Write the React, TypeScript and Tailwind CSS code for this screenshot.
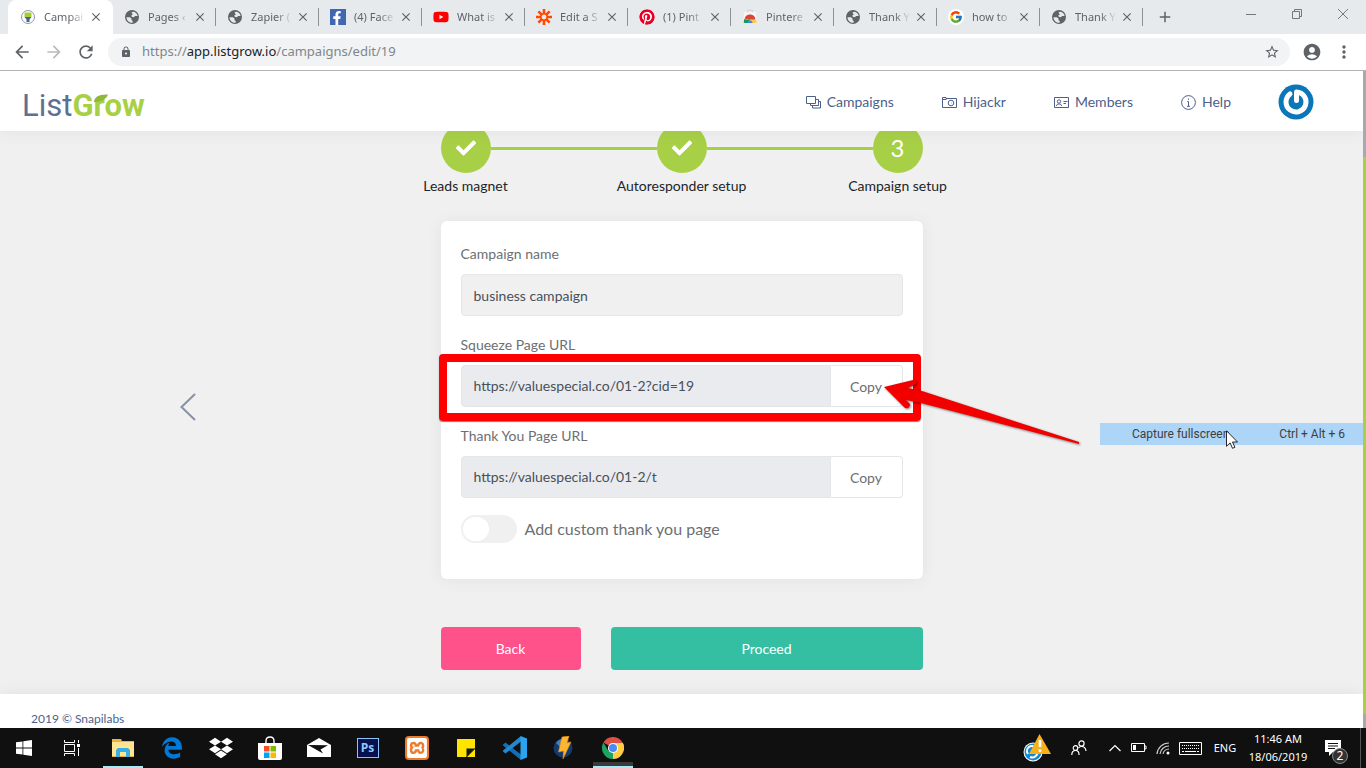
import React, { useState } from 'react';
import {
  MdAccountCircle,
  MdAdd,
  MdArrowBack,
  MdArrowForward,
  MdClose,
  MdLock,
  MdMoreVert,
  MdRefresh,
  MdStarBorder,
} from 'react-icons/md';
import { FaCheck, FaDropbox, FaFacebookF, FaPinterest, FaYoutube } from 'react-icons/fa';
import { FaEdgeLegacy } from 'react-icons/fa6';
import { FcGoogle } from 'react-icons/fc';
import { SiXampp } from 'react-icons/si';

// Favicons

const Globe = () => (
  <svg viewBox="0 0 16 16" className="size-4">
    <circle cx="8" cy="8" r="7" fill="#5f6368" />
    <path
      d="M2.500 8.200h3.300l1.700 1.400v1.700l1.300.800-.300 1.700C5 13.800 2.600 11.500 2.500 8.200ZM7.500 3.200l2.500-.400c2 .800 3.400 2.300 3.600 4.200H11l-1 1.200-2.300-.400-.500-1.300 1.500-.800Z"
      fill="#e7eaed"
    />
  </svg>
);

const ListGrowIcon = () => (
  <svg viewBox="0 0 16 16" className="size-4">
    <circle cx="8" cy="8" r="6.5" fill="#fff" stroke="#8797b3" />
    <path d="M4.500 3.500h7v4l-1.500 1.500H6l-1.500-1.500Z" fill="#a6ce39" />
    <path d="M4.500 8h7L9.500 10.500v2.500h-3v-2.500Z" fill="#4a6396" />
  </svg>
);

const FacebookIcon = () => (
  <span className="flex size-4 items-end justify-end bg-[#4267b2] pr-0.5">
    <FaFacebookF className="size-3.5 text-white" />
  </span>
);

const ZapierIcon = () => (
  <svg viewBox="0 0 16 16" className="size-4" stroke="#ff4a00" strokeWidth="2.6">
    <path d="M8 0v5M8 11v5M0 8h5M11 8h5M2.4 2.4l3.5 3.5M10.1 10.1l3.5 3.5M13.6 2.4l-3.5 3.5M5.9 10.1l-3.5 3.5" />
    <circle cx="8" cy="8" r="3.2" fill="none" strokeWidth="1.6" />
  </svg>
);

const WebStoreIcon = () => (
  <svg viewBox="0 0 16 16" className="size-4">
    <path d="M5.5 3V1.2h5V3" fill="none" stroke="#d0d3d6" />
    <path d="M2 3h12l.5 11h-13Z" fill="#f4f5f6" />
    <path d="M2.6 9.500a5.700 5.700 0 0 1 10.800 0l-1 1.500H8Z" fill="#db4437" />
    <path d="M2.2 10 1.700 14H6L8 11Z" fill="#0f9d58" />
    <path d="M8 10.5h6.2l.3 3.5H8Z" fill="#ffcd40" />
    <path d="M5.5 14a2.5 2.5 0 0 1 5 0Z" fill="#4285f4" />
  </svg>
);

const GoogleIcon = () => (
  <span className="flex size-4 items-center justify-center rounded-full bg-white">
    <FcGoogle className="size-3.5" />
  </span>
);

const tabs = [
  { title: 'Campai', icon: <ListGrowIcon /> },
  { title: 'Pages ‹', icon: <Globe /> },
  { title: 'Zapier (', icon: <Globe /> },
  { title: '(4) Face', icon: <FacebookIcon /> },
  { title: 'What is', icon: <FaYoutube className="size-4 text-[#ff0000]" /> },
  { title: 'Edit a S', icon: <ZapierIcon /> },
  { title: '(1) Pint', icon: <FaPinterest className="size-4 rounded-full bg-white text-[#e60023]" /> },
  { title: 'Pintere', icon: <WebStoreIcon /> },
  { title: 'Thank Y', icon: <Globe /> },
  { title: 'how to', icon: <GoogleIcon /> },
  { title: 'Thank Y', icon: <Globe /> },
];

function BrowserTabs() {
  return (
    <div className="flex h-[34px] bg-[#e7eaed] pl-2 text-[#5f6368]">
      {tabs.map((tab, i) => (
        <div
          key={i}
          className={
            i === 0
              ? 'flex w-[105px] items-center rounded-t-lg bg-white pl-3'
              : 'my-2 flex w-[103px] items-center border-r border-[#8f9295] pl-[11px]'
          }
        >
          {tab.icon}
          <span className="ml-2 w-[42px] text-[11px] whitespace-nowrap [mask-image:linear-gradient(to_right,#000_60%,transparent)]">
            {tab.title}
          </span>
          <button aria-label="Close tab" className="ml-[3px]">
            <MdClose className="size-3.5" />
          </button>
        </div>
      ))}
      <button aria-label="New tab" className="ml-[13px]">
        <MdAdd className="size-[18px]" />
      </button>
      <div className="ml-auto flex h-7 text-[#777]">
        <button aria-label="Minimize" className="flex w-[46px] items-center justify-center">
          <svg viewBox="0 0 10 10" className="size-2.5" stroke="currentColor"><path d="M0 5.5h10" /></svg>
        </button>
        <button aria-label="Restore" className="flex w-[46px] items-center justify-center">
          <svg viewBox="0 0 10 10" className="size-2.5" fill="none" stroke="currentColor">
            <path d="M.5 2.5h7v7h-7ZM2.5 2.5v-2h7v7h-2" />
          </svg>
        </button>
        <button aria-label="Close" className="flex w-[46px] items-center justify-center">
          <svg viewBox="0 0 10 10" className="size-2.5" stroke="currentColor"><path d="m0 0 10 10M10 0 0 10" /></svg>
        </button>
      </div>
    </div>
  );
}

function Toolbar() {
  return (
    <div className="flex h-[37px] items-center border-b border-[#b4b4b4] bg-white pr-3 pl-3 text-[#5f6368]">
      <button aria-label="Back" className="mr-3"><MdArrowBack className="size-5" /></button>
      <button aria-label="Forward" className="mr-3 text-[#bbb]"><MdArrowForward className="size-5" /></button>
      <button aria-label="Reload" className="mr-3"><MdRefresh className="size-5" /></button>
      <div className="flex h-7 flex-1 items-center rounded-full bg-[#f1f3f4] pr-2.5 pl-3">
        <MdLock className="size-3" />
        <div className="ml-2.5 flex-1 text-[13px] text-[#80868b]">
          https://<span className="text-[#202124]">app.listgrow.io</span>/campaigns/edit/19
        </div>
        <button aria-label="Bookmark"><MdStarBorder className="size-4" /></button>
      </div>
      <button aria-label="Profile" className="ml-3"><MdAccountCircle className="size-5" /></button>
      <button aria-label="Menu" className="ml-3"><MdMoreVert className="size-5" /></button>
    </div>
  );
}

// Site header

const navItems = [
  {
    label: 'Campaigns',
    icon: <path d="M.5 1.5h9v7h-9ZM10 4.5h2.5v6h-8V9M13 6.5h1.5v6.5h-8v-2" />,
  },
  {
    label: 'Hijackr',
    icon: (
      <>
        <path d="M.5 4.5h4M.5 2.5h3.5v1H14.5v9H.5Z" />
        <circle cx="9" cy="8" r="2.8" />
        <path d="M9 8h.5" />
      </>
    ),
  },
  {
    label: 'Members',
    icon: (
      <>
        <path d="M.5 2.5h14v10H.5ZM9.5 6.5h4M9.5 8.5h2.5M2.5 11c0-1.5 1-2 2.5-2s2.5.5 2.5 2" />
        <circle cx="5" cy="6.5" r="1.7" />
      </>
    ),
  },
  {
    label: 'Help',
    icon: (
      <>
        <circle cx="7.5" cy="7.5" r="6.9" />
        <path d="M7.5 3.5v1.3M6.3 6.5h1.2v4.5M6 11.3h3" />
      </>
    ),
  },
];

function Header() {
  return (
    <header className="relative z-20 flex h-[60px] items-center bg-white pr-[49px] pl-[22px] pt-0.5 shadow-[0_1px_15px_rgba(70,80,110,0.08)]">
      <a href="#" aria-label="ListGrow" className="relative mt-1.5 flex font-['Roboto',sans-serif] text-[31px] leading-none">
        <span className="text-[#5c7093]">List</span>
        <span className="font-bold text-[#a8d046]">Grow</span>
        <svg viewBox="0 0 14 8" className="absolute top-1 left-[72px] h-2 w-3.5">
          <path d="M0 8C0 3 5 0 14 .5 12 6 6 8 0 8Z" fill="#8fb83a" />
        </svg>
      </a>
      <nav className="ml-auto flex gap-12 text-sm text-[#4d5f8a]">
        {navItems.map((item) => (
          <a key={item.label} href="#" className="flex items-center gap-1.5">
            <svg viewBox="0 0 15 15" className="size-[15px]" fill="none" stroke="currentColor">
              {item.icon}
            </svg>
            {item.label}
          </a>
        ))}
      </nav>
      <button aria-label="Account" className="ml-[47px]">
        <svg viewBox="0 0 36 36" className="size-9">
          <circle cx="18" cy="18" r="17.5" fill="#0b76b8" />
          <path d="M12 10A10 10 0 1 0 18.500 8v8.500" fill="none" stroke="#fff" strokeWidth="5" strokeLinecap="round" strokeLinejoin="round" />
        </svg>
      </button>
    </header>
  );
}

// Campaign wizard

function Step({ label, children }: { label: string; children: React.ReactNode }) {
  return (
    <li className="flex w-[50px] flex-col items-center">
      <span className="flex size-[50px] items-center justify-center rounded-full bg-[#a8d046] text-2xl text-white">
        {children}
      </span>
      <span className="mt-[3px] text-sm whitespace-nowrap text-[#212529]">{label}</span>
    </li>
  );
}

const StepLine = () => <li aria-hidden="true" className="mt-6 h-[3px] flex-1 bg-[#a8d046]" />;

function UrlField({ id, label, value, children }: { id: string; label: string; value: string; children?: React.ReactNode }) {
  return (
    <div className="mt-[19px]">
      <label htmlFor={id} className="block text-sm">{label}</label>
      <div className="relative mt-2.5 flex h-[42px]">
        <input
          id={id}
          readOnly
          defaultValue={value}
          className="min-w-0 flex-1 rounded-l border border-[#e4e6ea] bg-[#e9ebef] px-3 text-sm text-[#495057] outline-none"
        />
        <button className="w-[72px] rounded-r border border-l-0 border-[#e4e6ea] bg-white pt-0.5 text-sm">Copy</button>
        {children}
      </div>
    </div>
  );
}

function Highlight() {
  return (
    <>
      <div className="pointer-events-none absolute -top-[11px] -right-[18px] -bottom-[14px] -left-[22px] rounded border-8 border-[#fe0000] shadow-[0_1px_1px_rgba(0,0,0,0.5)]" />
      <svg viewBox="879 375 204 72" className="pointer-events-none absolute top-2.5 left-full z-10 -ml-6 h-[72px] w-[204px] drop-shadow-[1px_1px_1px_rgba(0,0,0,0.5)]">
        <path
          d="M884 387 913 380Q917 380 916 384L908 388 922 391 1079 442 1079 444 921 403 906 400 910 404Q910 409 905 408Z"
          fill="#f20000"
        />
      </svg>
    </>
  );
}

function CampaignForm() {
  const [customPage, setCustomPage] = useState(false);

  return (
    <section className="-mt-2">
      <ol className="flex">
        <Step label="Leads magnet"><FaCheck className="size-5" /></Step>
        <StepLine />
        <Step label="Autoresponder setup"><FaCheck className="size-5" /></Step>
        <StepLine />
        <Step label="Campaign setup">3</Step>
      </ol>

      <form className="mt-[25px] rounded-md bg-white px-5 pt-[23px] pb-9 text-[#6c6f73] shadow-[0_1px_15px_rgba(70,80,110,0.08)]">
        <label htmlFor="name" className="block text-sm">Campaign name</label>
        <input
          id="name"
          readOnly
          defaultValue="business campaign"
          className="mt-2.5 h-[42px] w-full rounded border border-[#e4e6ea] bg-[#f0f0f1] px-3 text-sm text-[#495057] outline-none"
        />
        <UrlField id="squeeze" label="Squeeze Page URL" value="https://valuespecial.co/01-2?cid=19">
          <Highlight />
        </UrlField>
        <UrlField id="thanks" label="Thank You Page URL" value="https://valuespecial.co/01-2/t" />
        <label className="mt-[17px] flex h-7 items-center gap-2 text-base">
          <input
            type="checkbox"
            checked={customPage}
            onChange={(e) => setCustomPage(e.target.checked)}
            className="h-7 w-14 appearance-none rounded-full bg-[#f0f0f0] p-0.5 before:block before:h-6 before:w-[26px] before:rounded-full before:bg-white checked:bg-[#a8d046] checked:before:ml-auto"
          />
          Add custom thank you page
        </label>
      </form>

      <div className="mt-12 flex gap-[30px] pb-6 text-sm text-white">
        <button className="h-[43px] w-[140px] rounded bg-[#ff518a]">Back</button>
        <button className="h-[43px] flex-1 rounded bg-[#34bfa3]">Proceed</button>
      </div>
    </section>
  );
}

function CaptureMenu() {
  return (
    <div className="absolute top-[352px] right-0 z-30 w-[263px] font-['Roboto',sans-serif]">
      <button className="flex h-[22px] w-full items-center justify-between bg-[#add5f7] pr-[18px] pl-8 text-xs text-[#404040]">
        <span>Capture fullscreen</span>
        <span>Ctrl + Alt + 6</span>
      </button>
      <svg viewBox="0 0 12 19" className="absolute top-[7px] left-[126px] h-[19px] w-3">
        <path d="M.5.8v15.5l3.6-3.4 2.4 5.4 2.4-1-2.4-5.3h5Z" fill="#fff" stroke="#111" strokeWidth=".9" />
      </svg>
    </div>
  );
}

// Windows taskbar

const apps = [
  {
    name: 'File Explorer',
    running: true,
    icon: (
      <svg viewBox="0 0 22 20" className="h-5 w-[22px]">
        <path d="M0 1h9l1 2h12v16H0Z" fill="#e8b53a" />
        <path d="M0 4h22v14H0Z" fill="#ffe593" />
        <path d="M4 19v-7l2-2h10l2 2v7h-4v-5H8v5Z" fill="#35b1e8" />
      </svg>
    ),
  },
  { name: 'Edge', icon: <FaEdgeLegacy className="size-[22px] text-[#0078d7]" /> },
  { name: 'Dropbox', icon: <FaDropbox className="size-6 text-white" /> },
  {
    name: 'Store',
    icon: (
      <svg viewBox="0 0 24 24" className="size-6">
        <path d="M8 8V5q0-4 4-4t4 4v3" fill="none" stroke="#fff" strokeWidth="1.4" />
        <path d="M0 7h24v15q0 2-2 2H2q-2 0-2-2Z" fill="#fff" />
        <path d="M6 10h5.5v5.5H6Z" fill="#f25022" />
        <path d="M12.500 10H18v5.500h-5.500Z" fill="#7fba00" />
        <path d="M6 16.500h5.500V22H6Z" fill="#00a4ef" />
        <path d="M12.500 16.500H18V22h-5.500Z" fill="#ffb900" />
      </svg>
    ),
  },
  {
    name: 'Mail',
    icon: (
      <svg viewBox="0 0 24 20" className="h-5 w-6">
        <path d="M0 7 12 0l12 7v12H0Z" fill="#fff" />
        <path d="m1 7 20 .2-7.500 4.300 2.500 4Z" fill="#111" />
      </svg>
    ),
  },
  {
    name: 'Photoshop',
    icon: (
      <span className="flex h-5 w-[22px] items-center justify-center border border-[#8cc4f5] bg-[#08104f] font-['Open_Sans',sans-serif] text-xs leading-none font-bold text-[#8cc8ff]">
        Ps
      </span>
    ),
  },
  {
    name: 'XAMPP',
    icon: (
      <span className="flex size-6 items-center justify-center rounded bg-[#ee7a2b]">
        <SiXampp className="size-5 text-white" />
      </span>
    ),
  },
  {
    name: 'Sticky Notes',
    icon: (
      <svg viewBox="0 0 18 18" className="size-[18px]">
        <path d="M0 0h18v9L9 18H0Z" fill="#ffe400" />
        <path d="M9.500 9.500H18L9.500 18Z" fill="#161616" />
        <path d="M18 10v8h-8Z" fill="#ffe400" />
      </svg>
    ),
  },
  {
    name: 'Visual Studio Code',
    icon: (
      <svg viewBox="0 0 24 24" className="size-6">
        <path d="M0 8.500 2.500 6.500 18 18.500V24L0 9.500Z" fill="#0f6fb8" />
        <path d="M0 15.500 2.500 17.500 18 5.500V0L0 14.500Z" fill="#2489ca" />
        <path d="m17.500 0 6.500 2.500v19L17.500 24Z" fill="#2aa4f0" />
      </svg>
    ),
  },
  {
    name: 'Winamp',
    icon: (
      <svg viewBox="0 0 24 24" className="size-6">
        <circle cx="11" cy="12" r="9.500" fill="#113a6d" />
        <path d="M4 7q4-5 9-4L9 12Z" fill="#447fb8" />
        <path d="m10 1 7-1-2 7 4-1-8 17 .500-8-5 1Z" fill="#fdb62f" stroke="#e98a16" strokeWidth=".6" />
      </svg>
    ),
  },
  {
    name: 'Chrome',
    running: true,
    active: true,
    icon: (
      <svg viewBox="0 0 24 24" className="size-[22px]">
        <path d="M12 12 1.600 6A12 12 0 0 1 22.400 6Z" fill="#dd5144" />
        <path d="M12 12 22.400 6A12 12 0 0 1 12 24Z" fill="#ffcd46" />
        <path d="M12 12 12 24A12 12 0 0 1 1.600 6L6.800 15Z" fill="#1da462" />
        <path d="M12 6.500h10.700q1.300 2 1.300 5.500T12 24l4.800-9.200Z" fill="#ffcd46" />
        <circle cx="12" cy="12" r="5.500" fill="#fff" />
        <circle cx="12" cy="12" r="4.400" fill="#4c8bf5" />
      </svg>
    ),
  },
];

function Tray() {
  return (
    <div className="ml-auto flex items-center *:flex *:h-10 *:items-center *:justify-center">
      <button aria-label="Update warning" className="w-9">
        <svg viewBox="0 0 28 28" className="size-7">
          <circle cx="10" cy="18" r="9.500" fill="#fff" />
          <circle cx="10" cy="18" r="8.500" fill="#1288cf" />
          <path d="M5 20a5 5 0 0 1 8-6M14 17a5 5 0 0 1-7 6" stroke="#fff" strokeWidth="2" fill="none" />
          <path d="M16.500 0 28 20H6Z" fill="#f7b11d" />
          <path d="M17 6v7M17 15.500v2.500" stroke="#fff" strokeWidth="2.600" />
        </svg>
      </button>
      <button aria-label="People" className="w-12">
        <svg viewBox="0 0 16 16" className="size-4" fill="none" stroke="#fff" strokeWidth="1.200">
          <circle cx="10.500" cy="3.500" r="2.600" />
          <circle cx="4.500" cy="8" r="2.300" />
          <path d="M.800 15q0-4.500 3.700-4.500T8 15M7.500 8q1-1.500 3-1.500 4 0 4.500 4.500" />
        </svg>
      </button>
      <button aria-label="Show hidden icons" className="w-6">
        <svg viewBox="0 0 12 8" className="h-2 w-3" fill="none" stroke="#fff" strokeWidth="1.200"><path d="m.500 7 5.500-5.500L11.500 7" /></svg>
      </button>
      <span className="w-6">
        <svg viewBox="0 0 16 10" className="h-2.5 w-4" fill="none" stroke="#fff">
          <path d="M.500.500h13v8H.500ZM14 3h1v3h-1" />
          <path d="M2 2h3v5H2Z" fill="#fff" stroke="none" />
        </svg>
      </span>
      <span className="w-6">
        <svg viewBox="0 0 14 14" className="size-3.5" fill="none" stroke="#ccc" strokeWidth="1.200">
          <path d="M1 13A12 12 0 0 1 13 2M4 13A9 9 0 0 1 13 5M7 13A6 6 0 0 1 13 8" />
          <circle cx="12" cy="12" r="1.500" fill="#fff" stroke="none" />
        </svg>
      </span>
      <span className="w-8">
        <svg viewBox="0 0 24 13" className="h-[13px] w-6" fill="none" stroke="#fff">
          <path d="M.500.500h22v12H.500Z" />
          <path d="M3 3.500h17M3 6.500h17" strokeDasharray="1 1" />
          <path d="M3 9.500h2M6 9.500h11M18 9.500h2" />
        </svg>
      </span>
      <span className="w-9 text-[11px]">ENG</span>
      <span className="w-[70px] flex-col text-center text-[11px] leading-[18px]">
        <span>11:46 AM</span>
        <span>18/06/2019</span>
      </span>
      <button aria-label="Notifications" className="relative w-12 border-r border-[#555]">
        <svg viewBox="0 0 16 16" className="mr-2 size-4">
          <path d="M0 0h16v12H8l-4 4v-4H0Z" fill="#fff" />
          <path d="M3 3.500h10M3 6h10M3 8.500h7" stroke="#111" />
        </svg>
        <span className="absolute right-3 bottom-1 flex size-4 items-center justify-center rounded-full border border-[#888] bg-[#333] text-xs leading-none">
          2
        </span>
      </button>
    </div>
  );
}

function Taskbar() {
  return (
    <div className="flex h-10 shrink-0 bg-[#101010] pr-[5px] text-white">
      <button aria-label="Start" className="flex w-12 items-center justify-center">
        <svg viewBox="0 0 16 16" className="size-4" fill="#fff">
          <path d="M0 2.300 6.500 1.400v6.200H0ZM7.300 1.300 16 0v7.600H7.300ZM0 8.400h6.500v6.200L0 13.700ZM7.300 8.400H16V16l-8.700-1.300Z" />
        </svg>
      </button>
      <button aria-label="Task view" className="mr-0.5 flex w-12 items-center justify-center">
        <svg viewBox="0 0 17 16" className="h-4 w-[17px]" fill="none" stroke="#fff">
          <path d="M.500 4.500h10v7H.500ZM.500 0v2.500h10V0M.500 16v-2.500h10V16M14.500 0v3M14.500 8v8" />
          <path d="M13 4h3v3h-3Z" fill="#fff" stroke="none" />
        </svg>
      </button>
      {apps.map((app) => (
        <button key={app.name} aria-label={app.name} className="relative flex w-[49px] items-center justify-center">
          {app.icon}
          {app.active && <span className="absolute bottom-0.5 h-1 w-10 bg-[#3a3a3a]" />}
          {app.running && <span className="absolute bottom-0 h-0.5 w-10 bg-[#a3ecf5]" />}
        </button>
      ))}
      <Tray />
    </div>
  );
}

export default function App() {
  return (
    <div className="flex h-screen flex-col overflow-hidden bg-[#f0f0f0] font-['Noto_Sans',sans-serif]">
      <BrowserTabs />
      <Toolbar />
      <div className="relative flex min-h-0 flex-1 font-['Lato',sans-serif]">
        <div className="relative flex-1 overflow-hidden">
          <Header />
          <main className="grid grid-cols-[1fr_482px_1fr]">
            <div className="flex items-center justify-center pr-16 pb-3">
              <button aria-label="Previous" className="text-[#8791a5]">
                <svg viewBox="0 0 16 28" className="h-7 w-4" fill="none" stroke="currentColor" strokeWidth="2">
                  <path d="M15 1 1.500 14 15 27" />
                </svg>
              </button>
            </div>
            <CampaignForm />
          </main>
          <footer className="h-20 bg-white px-[31px] pt-[17px] text-xs text-[#4d5f8a] shadow-[0_1px_15px_rgba(70,80,110,0.1)]">
            2019 © Snapilabs
          </footer>
          <CaptureMenu />
        </div>
        {/* page scrollbar */}
        <div className="flex w-[3px] flex-col bg-[#a9a9ad] pt-[86px] pb-3.5">
          <div className="flex-1 bg-[#a8d046]" />
        </div>
      </div>
      <Taskbar />
    </div>
  );
}
